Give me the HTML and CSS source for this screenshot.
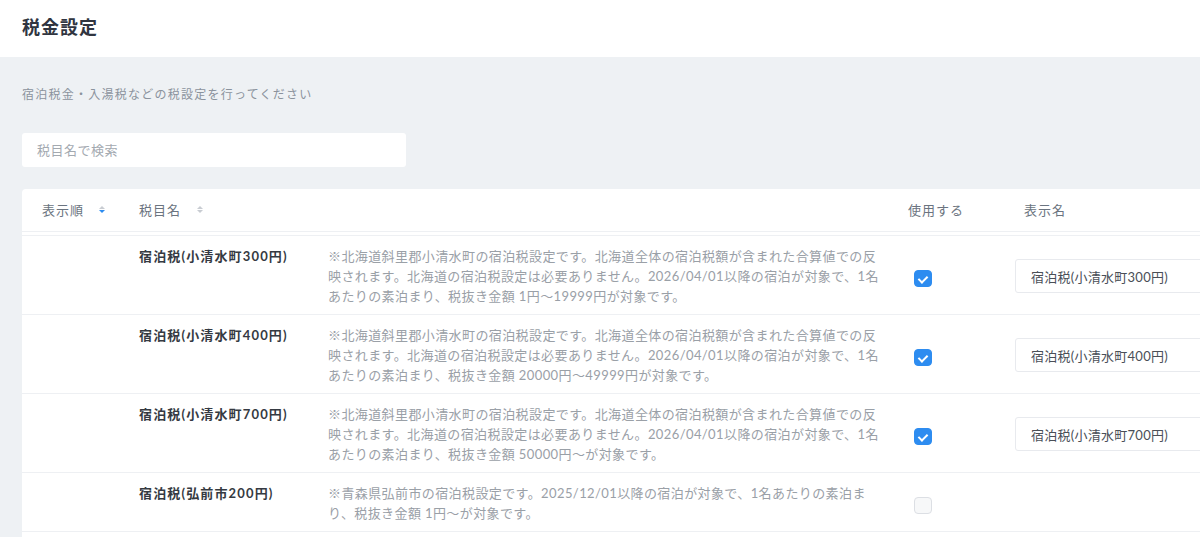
FILE: index.html
```html
<!DOCTYPE html>
<html lang="ja">
<head>
<meta charset="utf-8">
<title>税金設定</title>
<link rel="stylesheet" href="styles.css">
</head>
<body>
<header class="topbar">
  <h1 class="title">税金設定</h1>
</header>
<main class="content">
  <p class="lead">宿泊税金・入湯税などの税設定を行ってください</p>
  <div class="search">
    <input class="search-input" type="text" placeholder="税目名で検索">
  </div>
  <div class="table">
    <div class="thead">
      <div class="th th-order">表示順<span class="sort active"><i class="up"></i><i class="down"></i></span></div>
      <div class="th th-name">税目名<span class="sort"><i class="up"></i><i class="down"></i></span></div>
      <div class="th th-use">使用する</div>
      <div class="th th-disp">表示名</div>
    </div>
    <div class="tbody">
      <div class="tr">
        <div class="td td-order"></div>
        <div class="td td-name">
          <div class="name">宿泊税(小清水町300円)</div>
          <div class="desc">※北海道斜里郡小清水町の宿泊税設定です。北海道全体の宿泊税額が含まれた合算値での反映されます。北海道の宿泊税設定は必要ありません。2026/04/01以降の宿泊が対象で、1名あたりの素泊まり、税抜き金額 1円～19999円が対象です。</div>
        </div>
        <div class="td td-use"><span class="check on"></span></div>
        <div class="td td-disp"><input class="disp-input" type="text" value="宿泊税(小清水町300円)"></div>
      </div>
      <div class="tr">
        <div class="td td-order"></div>
        <div class="td td-name">
          <div class="name">宿泊税(小清水町400円)</div>
          <div class="desc">※北海道斜里郡小清水町の宿泊税設定です。北海道全体の宿泊税額が含まれた合算値での反映されます。北海道の宿泊税設定は必要ありません。2026/04/01以降の宿泊が対象で、1名あたりの素泊まり、税抜き金額 20000円～49999円が対象です。</div>
        </div>
        <div class="td td-use"><span class="check on"></span></div>
        <div class="td td-disp"><input class="disp-input" type="text" value="宿泊税(小清水町400円)"></div>
      </div>
      <div class="tr">
        <div class="td td-order"></div>
        <div class="td td-name">
          <div class="name">宿泊税(小清水町700円)</div>
          <div class="desc">※北海道斜里郡小清水町の宿泊税設定です。北海道全体の宿泊税額が含まれた合算値での反映されます。北海道の宿泊税設定は必要ありません。2026/04/01以降の宿泊が対象で、1名あたりの素泊まり、税抜き金額 50000円～が対象です。</div>
        </div>
        <div class="td td-use"><span class="check on"></span></div>
        <div class="td td-disp"><input class="disp-input" type="text" value="宿泊税(小清水町700円)"></div>
      </div>
      <div class="tr">
        <div class="td td-order"></div>
        <div class="td td-name">
          <div class="name">宿泊税(弘前市200円)</div>
          <div class="desc">※青森県弘前市の宿泊税設定です。2025/12/01以降の宿泊が対象で、1名あたりの素泊まり、税抜き金額 1円～が対象です。</div>
        </div>
        <div class="td td-use"><span class="check"></span></div>
        <div class="td td-disp"></div>
      </div>
      <div class="tr tr-empty"></div>
    </div>
  </div>
</main>
</body>
</html>
```

FILE: styles.css
```css
* { box-sizing: border-box; }
html, body { margin: 0; padding: 0; overflow: hidden; }
body {
  font-family: Lato, "Noto Sans CJK JP", sans-serif;
  letter-spacing: 0.06em;
  background: #eef1f4;
  color: #353a42;
  width: 1200px;
  height: 537px;
}
.topbar {
  background: #fff;
  height: 57px;
  display: flex;
  align-items: center;
  padding: 0 22px 6px;
}
.title {
  margin: 0;
  font-size: 18px;
  font-weight: 700;
  color: #303540;
}
.content {
  padding: 28px 0 0 22px;
}
.lead {
  margin: 0;
  font-size: 12px;
  line-height: 20px;
  letter-spacing: 1.25px;
  color: #8b939d;
}
.search {
  margin-top: 28px;
  width: 384px;
}
.search-input {
  width: 100%;
  height: 34px;
  border: none;
  border-radius: 3px;
  background: #fff;
  padding: 0 15px;
  font-family: inherit;
  letter-spacing: 0.04em;
  font-size: 13px;
  outline: none;
}
.search-input::placeholder { color: #a3a9b0; }
.table {
  margin-top: 22px;
  width: 1282px;
  background: #fff;
  border-radius: 4px 0 0 0;
}
.thead, .tr {
  display: grid;
  grid-template-columns: 117px 749px 116px 300px;
}
.thead {
  height: 43px;
  border-bottom: 1px solid #eef0f3;
  align-items: center;
}
.th {
  font-size: 13px;
  color: #6b7480;
  display: flex;
  align-items: center;
  padding-bottom: 1px;
}
.th-order { padding-left: 20px; }
.th-use { padding-left: 20px; }
.th-disp { padding-left: 20px; }
.sort {
  display: inline-flex;
  flex-direction: column;
  gap: 1px;
  margin-left: 15px;
}
.th-name .sort { margin-left: 16px; }
.sort i {
  display: block;
  width: 0;
  height: 0;
  border-left: 3.5px solid transparent;
  border-right: 3.5px solid transparent;
}
.sort .up { border-bottom: 3.5px solid #c8ccd2; }
.sort .down { border-top: 3.5px solid #c8ccd2; }
.sort.active .down { border-top-color: #2d8cf0; }
.tbody {
  padding-top: 3px;
}
.tr {
  border-top: 1px solid #eef0f3;
}
.tr-empty { height: 40px; }
.td {
  padding: 10px 0 8px;
}
.td-name {
  display: flex;
}
.name {
  width: 189px;
  flex: none;
  font-size: 13px;
  font-weight: 700;
  line-height: 20px;
  letter-spacing: 1.15px;
  color: #353a42;
}
.desc {
  width: 556px;
  font-size: 13px;
  line-height: 20px;
  letter-spacing: 0.4px;
  color: #9aa0a7;
}
.td-use {
  display: flex;
  align-items: center;
  padding-left: 26px;
}
.check {
  display: block;
  width: 18px;
  height: 17px;
  border-radius: 4px;
  border: 1px solid #dcdfe4;
  background: #f7f8f9;
  margin-top: 4px;
  position: relative;
}
.check.on {
  background: #2d8cf0;
  border-color: #2d8cf0;
}
.check.on::after {
  content: "";
  position: absolute;
  left: 5px;
  top: 3px;
  width: 4px;
  height: 7px;
  border-right: 2px solid #fff;
  border-bottom: 2px solid #fff;
  transform: rotate(45deg);
}
.td-disp {
  display: flex;
  align-items: center;
  padding-left: 11px;
}
.disp-input {
  width: 280px;
  height: 34px;
  border: 1px solid #e8eaee;
  border-radius: 3px;
  padding: 0 15px;
  font-family: inherit;
  font-size: 13px;
  letter-spacing: 0.02em;
  color: #4a4f57;
  outline: none;
  background: #fff;
}
```
